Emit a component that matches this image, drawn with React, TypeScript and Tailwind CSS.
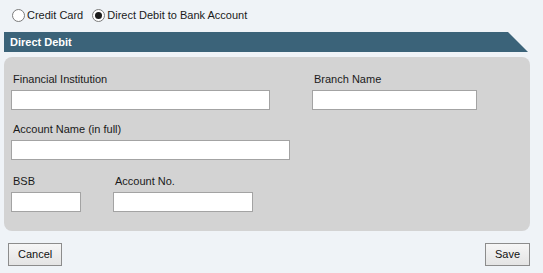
import React from 'react'

function Radio({ checked, label }: { checked?: boolean; label: string }) {
  return (
    <label className="flex items-center gap-[2px]">
      <span className="flex h-[13px] w-[13px] items-center justify-center rounded-full border border-[#7b7b7b] bg-white">
        {checked ? <span className="h-[7px] w-[7px] rounded-full bg-[#1c1c1c]" /> : null}
      </span>
      <span className="text-[#1a1a1a]">{label}</span>
    </label>
  )
}

function Field({ label, width }: { label: string; width: string }) {
  return (
    <div>
      <div className="pl-[2px] leading-[11px] text-[#1a1a1a]">{label}</div>
      <input type="text" className={`mt-[5px] block h-[20px] border border-[#a3a3a3] bg-white outline-none ${width}`} />
    </div>
  )
}

function Btn({ children }: { children: React.ReactNode }) {
  return (
    <button
      type="button"
      className="h-[23px] border border-[#8c8c8c] bg-gradient-to-b from-[#f6f6f6] to-[#e4e4e4] px-[9px] leading-[21px] text-[#111]"
    >
      {children}
    </button>
  )
}

export default function App() {
  return (
    <div className="h-[273px] w-[543px] overflow-hidden bg-[#eff3f7] font-['Liberation_Sans',Arial,sans-serif] text-[11px]">
      <div className="flex h-[32px] items-center gap-[9px] pb-[1px] pl-[12px]">
        <Radio label="Credit Card" />
        <Radio checked label="Direct Debit to Bank Account" />
      </div>

      <div className="ml-[4px] flex h-[20px] w-[524px] items-center bg-[#3b6379] pl-[6px] font-bold text-white [clip-path:polygon(0_0,calc(100%-20px)_0,100%_100%,0_100%)]">
        Direct Debit
      </div>

      <div className="ml-[4px] mt-[5px] h-[174px] w-[526px] rounded-[8px] bg-[#d3d3d3] pl-[7px] pt-[17px]">
        <div className="flex gap-[42px]">
          <Field label="Financial Institution" width="w-[259px]" />
          <Field label="Branch Name" width="w-[165px]" />
        </div>
        <div className="mt-[14px]">
          <Field label="Account Name (in full)" width="w-[279px]" />
        </div>
        <div className="mt-[16px] flex gap-[32px]">
          <Field label="BSB" width="w-[70px]" />
          <Field label="Account No." width="w-[140px]" />
        </div>
      </div>

      <div className="mt-[12px] flex w-[530px] justify-between pl-[8px]">
        <Btn>Cancel</Btn>
        <Btn>Save</Btn>
      </div>
    </div>
  )
}
